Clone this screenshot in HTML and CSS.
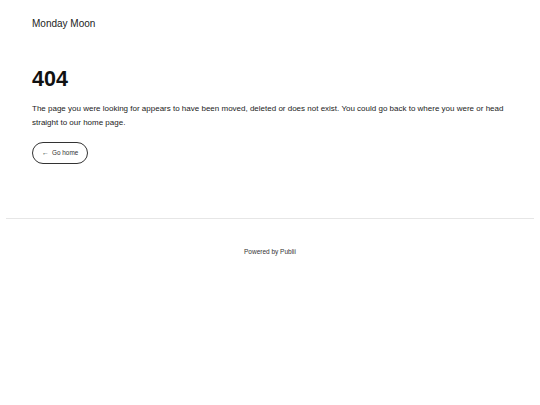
FILE: index.html
```html
<!DOCTYPE html>
<html>
<head>
<meta charset="utf-8">
<link rel="stylesheet" href="styles.css">
</head>
<body>
<header class="top">
  <a class="logo" href="#">Monday Moon</a>
</header>
<main class="content">
  <h1 class="title">404</h1>
  <p class="text">The page you were looking for appears to have been moved, deleted or does not exist. You could go back to where you were or head straight to our home page.</p>
  <a class="btn" href="#"><span class="arrow">&larr;</span> Go home</a>
</main>
<footer class="footer">
  <p class="powered">Powered by Publii</p>
</footer>
</body>
</html>
```
FILE: styles.css
```css
* { box-sizing: border-box; }
html, body { margin: 0; padding: 0; background: #fff; }
body {
  font-family: "Liberation Sans", Arial, sans-serif;
  color: #222;
}
.top {
  padding: 17px 32px 0;
  height: 64px;
}
.logo {
  display: block;
  font-size: 10px;
  line-height: 13px;
  color: #222;
  text-decoration: none;
}
.content {
  padding: 0 32px;
}
.title {
  margin: 0;
  font-size: 21.5px;
  line-height: 30px;
  font-weight: 700;
  color: #111;
}
.text {
  margin: 8px 0 11px;
  font-size: 8px;
  line-height: 14px;
  color: #222;
}
.btn {
  display: inline-flex;
  align-items: center;
  gap: 3px;
  height: 22px;
  padding: 0 9px;
  border: 1px solid #333;
  border-radius: 11px;
  font-size: 6.4px;
  color: #333;
  text-decoration: none;
}
.arrow { font-size: 7px; }
.footer {
  margin: 54px 6px 0;
  border-top: 1px solid #e6e6e6;
  padding-top: 28px;
  text-align: center;
}
.powered {
  margin: 0;
  font-size: 6.5px;
  line-height: 10px;
  color: #333;
}
```
